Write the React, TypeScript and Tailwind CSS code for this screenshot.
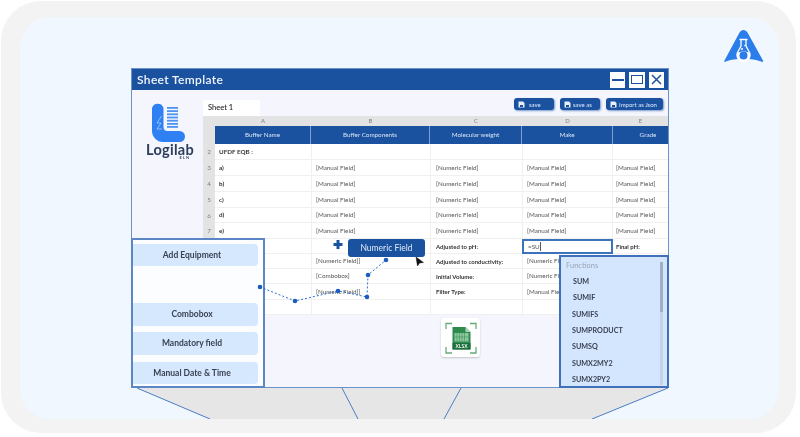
const COLS = "grid grid-cols-[12px_96px_119px_92px_91px_55px]";

type Row = { n?: string; a?: string; b?: string; c?: string; d?: string; e?: string; bold?: boolean; h: string; input?: boolean };

const M = "[Manual Field]";
const N = "[Numeric Field]";
const rows: Row[] = [
  { n: "2", a: "UFDF EQB :", h: "h-[16px]" },
  { n: "3", a: "a)", b: M, c: N, d: M, e: M, h: "h-[16px]" },
  { n: "4", a: "b)", b: M, c: N, d: M, e: M, h: "h-[16px]" },
  { n: "5", a: "c)", b: M, c: N, d: M, e: M, h: "h-[16px]" },
  { n: "6", a: "d)", b: M, c: N, d: M, e: M, h: "h-[15px]" },
  { n: "7", a: "e)", b: M, c: N, d: M, e: M, h: "h-[16px]" },
  { c: "Adjusted to pH:", input: true, e: "Final pH:", bold: true, h: "h-[15px]" },
  { b: "[Numeric Field]]", c: "Adjusted to conductivity:", d: N, bold: true, h: "h-[15px]" },
  { b: "[Combobox]", c: "Initial Volume:", d: N, bold: true, h: "h-[15px]" },
  { b: "[Numeric Field]]", c: "Filter Type:", d: M, bold: true, h: "h-[16px]" },
  { h: "h-[15px]" },
];

function Logo() {
  return (
    <div className="flex flex-col pt-[12px] pl-[14px]">
      <svg width="33" height="40" viewBox="0 0 33 40" className="ml-[6px]">
        <path d="M0 6a6 6 0 0 1 11.500 0v19a4 4 0 0 0 4 4h12a5.500 5.500 0 0 1 0 11H11C5 40 0 35 0 29Z" fill="#2f80f2" />
        <path d="M9.500 14L5 21h4L5 27h5" fill="none" stroke="#bcd8fb" strokeWidth="0.700" />
        {[5, 8.200, 11.400, 14.600, 17.800, 21, 24].map((y) => (
          <rect key={y} x="15" y={y} width="11" height="1.800" fill="#4d94f4" />
        ))}
      </svg>
      <div className="text-[14.500px] leading-[13px] font-bold text-[#2c3e5c] font-['Lato',sans-serif] tracking-[0.3px] mt-[1px]">Logilab</div>
      <div className="self-end mr-[13px] text-[4px] leading-[4px] font-bold tracking-[1px] text-[#3b4c68]">ELN</div>
    </div>
  );
}

function Flask() {
  return (
    <svg className="absolute right-[15px] top-[12px]" width="40" height="33" viewBox="0 0 40 33">
      <path d="M15.500 3.500C17.500 0 21.500 0 23.500 3.500L39 31.500C40 33 38 33 37 32.500C32 30.500 27 30 20 30C12 30 7 30.500 2 32.500C1 33 -0.500 33 0.500 31.500Z" fill="#2b7de9" />
      <path d="M15.500 10.500h8M17 10.500v6.500L13.500 23.500a6.500 6.500 0 1 0 12 0L22 17V10.500" fill="#2b7de9" stroke="#fff" strokeWidth="1.300" />
      <path d="M13.500 24C16 22 23 22 25.500 24a6.500 6.500 0 1 1 -12 0Z" fill="#fff" />
      <circle cx="19.500" cy="26.500" r="4" fill="#2b7de9" />
      <circle cx="18" cy="20" r="1" fill="#fff" />
      <circle cx="21" cy="16.500" r="0.800" fill="#fff" />
    </svg>
  );
}

function ToolBtn({ label, w, pad }: { label: string; w: string; pad: string }) {
  return (
    <div className={`${w} h-[12px] bg-[#1a52a0] rounded-[3px] shadow-[1px_1px_2px_rgba(26,82,160,0.55)] flex items-center pl-[4px] text-[6px] text-[#dce8f8]`}>
      <svg width="7" height="7" viewBox="0 0 7 7" className="shrink-0">
        <path d="M0.500 0.500H5L6.500 2V6.500H0.500Z" fill="#e6effa" />
        <rect x="2" y="4" width="3" height="2" fill="#1a52a0" />
      </svg>
      <span className={`${pad} whitespace-nowrap`}>{label}</span>
    </div>
  );
}

function TitleBar() {
  return (
    <div className="h-[21px] bg-[#1a52a0] flex items-center justify-between pl-[5px] pr-[4px] shrink-0">
      <div className="text-[12px] font-semibold text-[#f2f6fc] font-['Lato',sans-serif] tracking-[0.35px]">Sheet Template</div>
      <div className="flex gap-[4px]">
        <div className="w-[15px] h-[16px] bg-white flex items-center justify-center">
          <div className="w-[12px] h-[2px] bg-[#1a52a0]" />
        </div>
        <div className="w-[16px] h-[16px] bg-white flex items-center justify-center">
          <div className="w-[12px] h-[9px] border-[1.500px] border-[#1a52a0]" />
        </div>
        <div className="w-[15px] h-[16px] bg-white flex items-center justify-center">
          <svg width="11" height="11" viewBox="0 0 11 11">
            <path d="M1 1l9 9M10 1l-9 9" stroke="#1a52a0" strokeWidth="1.500" />
          </svg>
        </div>
      </div>
    </div>
  );
}

function Table() {
  return (
    <div className="w-[465px] font-['Lato',sans-serif]">
      <div className={`${COLS} h-[10px] bg-[#e3e3e3] text-[6px] leading-[10px] text-[#808080] text-center`}>
        <div />
        {["A", "B", "C", "D", "E"].map((l) => (
          <div key={l}>{l}</div>
        ))}
      </div>
      <div className={`${COLS} h-[18px] bg-[#e3e3e3]`}>
        <div />
        {["Buffer Name", "Buffer Components", "Molecular weight", "Make", "Grade"].map((l, i) => (
          <div key={l} className={`bg-[#1a52a0] text-[6.300px] text-[#d8e4f5] flex items-center justify-center ${i < 4 ? "border-r border-[#7c9fd0]" : "pl-[15px]"}`}>
            {l}
          </div>
        ))}
      </div>
      {rows.map((r, i) => (
        <div key={i} className={`${COLS} ${r.h} bg-white text-[6.300px] text-[#555]`}>
          <div className="bg-[#e3e3e3] text-[#808080] flex items-center justify-center">{r.n}</div>
          <div className="pl-[4px] flex items-center font-bold text-[#333] border-b border-[#f0f0f0]">{r.a}</div>
          <div className="pl-[4px] flex items-center border-l border-b border-[#f0f0f0]">{r.b}</div>
          <div className={`pl-[5px] flex items-center border-l border-b border-[#f0f0f0] whitespace-nowrap ${r.bold ? "font-bold text-[#333] text-[6px]" : ""}`}>{r.c}</div>
          {r.input ? (
            <div className="border-2 border-[#3d72bd] flex items-center pl-[4px]">
              =SU<span className="w-[0.700px] h-[9px] bg-[#555]" />
            </div>
          ) : (
            <div className="pl-[4px] flex items-center border-x border-b border-[#f0f0f0] whitespace-nowrap overflow-hidden">{r.d}</div>
          )}
          <div className={`pl-[3px] flex items-center border-b border-[#f0f0f0] whitespace-nowrap ${r.bold ? "font-bold text-[#333] text-[6px]" : ""}`}>{r.e}</div>
        </div>
      ))}
    </div>
  );
}

function Xlsx() {
  return (
    <div className="w-[39px] h-[39px] ml-[238px] mt-[3px] bg-white rounded-[3px] shadow-[0_1px_2px_rgba(0,0,0,0.2)] flex items-center justify-center">
      <svg width="32" height="32" viewBox="0 0 32 32">
        <path d="M1 7V1.500H7M25 1.500H31V7M1 25V31H7M25 31H31V25" fill="none" stroke="#68ab79" strokeWidth="1.300" />
        <path d="M7.500 5H20.500L25.500 10V27.500H7.500Z" fill="#2e8b4e" />
        <path d="M20.500 5V10H25.500Z" fill="#a9d5b6" />
        <rect x="9.500" y="11" width="14" height="8.500" fill="#8cc69d" />
        <path d="M12 11V19.500M14.500 11V19.500M17 11V19.500M19.500 11V19.500M9.500 15H23.500" stroke="#2e8b4e" strokeWidth="0.500" />
        <rect x="7.500" y="21" width="18" height="6.500" fill="#1f6f3c" />
        <text x="16.500" y="26.200" fontSize="5" fontWeight="700" fill="#e8f4ec" textAnchor="middle" fontFamily="Lato, sans-serif">XLSX</text>
      </svg>
    </div>
  );
}

function SidePanel() {
  const cls = "w-[125px] bg-[#d6e8fe] rounded-r-[4px] flex items-center justify-center pr-[7px] text-[8.500px] font-bold text-[#3a4152]";
  return (
    <div className="absolute left-[-1px] bottom-[-1px] w-[134px] h-[150px] bg-[#fcfdff] border-2 border-[#5c86c6] pt-[4px] flex flex-col font-['Lato',sans-serif]">
      <div className={`${cls} h-[22px]`}>Add Equipment</div>
      <div className="h-[37px] shrink-0" />
      <div className={`${cls} h-[23px]`}>Combobox</div>
      <div className={`${cls} h-[23px] mt-[6px]`}>Mandatory field</div>
      <div className={`${cls} h-[22px] mt-[7px]`}>Manual Date &amp; Time</div>
    </div>
  );
}

function FunctionList() {
  const items: [string, string][] = [
    ["SUM", "pl-[12px]"],
    ["SUMIF", "pl-[12px]"],
    ["SUMIFS", "pl-[11px]"],
    ["SUMPRODUCT", "pl-[11px]"],
    ["SUMSQ", "pl-[11px]"],
    ["SUMX2MY2", "pl-[11px]"],
    ["SUMX2PY2", "pl-[11px]"],
  ];
  return (
    <div className="absolute right-[-1px] bottom-[-1px] w-[110px] h-[133px] bg-[#d4e6fd] border-2 border-[#3f70b9] font-['Lato',sans-serif]">
      <div className="pl-[5px] pt-[3px] h-[17px] text-[7.500px] text-[#9aa6b8]">Functions</div>
      {items.map(([t, p]) => (
        <div key={t} className={`h-[16.400px] flex items-center text-[7.200px] font-bold text-[#3a4152] ${p}`}>
          {t}
        </div>
      ))}
      <div className="absolute right-[4px] top-[5px] bottom-[1px] w-[3px] bg-[#c3d4ea]">
        <div className="h-[50px] bg-[#9fb1c9]" />
      </div>
    </div>
  );
}

function DragOverlay() {
  const pts: [number, number][] = [
    [128, 218],
    [163, 232],
    [206, 222],
    [235, 228],
    [236, 206],
    [254, 191],
  ];
  return (
    <>
      <svg className="absolute left-0 top-0" width="536" height="319" viewBox="0 0 536 319">
        <polyline points={pts.map((p) => p.join(",")).join(" ")} fill="none" stroke="#2c6fd1" strokeWidth="1" strokeDasharray="2 2" />
        {pts.map((p) => (
          <circle key={p[0]} cx={p[0]} cy={p[1]} r="2.300" fill="#1a5cc0" />
        ))}
        <path d="M204.500 171h3v3h3v3h-3v3h-3v-3h-3v-3h3Z" fill="#1a52a0" />
        <path d="M284 188l1.500 9 2-3 4-0.500Z" fill="#111" stroke="#111" strokeWidth="0.500" />
      </svg>
      <div className="absolute left-[216px] top-[170px] w-[77px] h-[18px] bg-[#1a52a0] rounded-[3px] flex items-center justify-center text-[8.500px] text-[#dfe9f7] font-['Lato',sans-serif]">
        Numeric Field
      </div>
    </>
  );
}

function Stand() {
  return (
    <svg width="759" height="31" viewBox="0 0 759 31" className="shrink-0 -ml-[111px]">
      <polygon points="117,0 190,31 572,31 648,0" fill="#e6e6e6" />
      <path d="M117 0L190 31M648 0L572 31M322 0L338 31M441 0L424 31" stroke="#4b7cc4" strokeWidth="1" fill="none" />
    </svg>
  );
}

export default function App() {
  return (
    <div className="w-[800px] h-[437px] bg-white overflow-hidden p-[1px] font-['Lato',sans-serif] blur-[0.4px]">
      <div className="w-[795px] h-[432px] bg-[#f3f3f3] rounded-[40px] pt-[16px] pb-[14px] pl-[19px] pr-[17px]">
        <div className="relative h-full bg-[#f0f7ff] rounded-[30px] overflow-hidden pl-[111px] pt-[51px] flex flex-col items-start">
          <Flask />
          <div className="relative w-[538px] h-[320px] shrink-0 border border-[#6a93cc] bg-[#f5f5fe] flex flex-col">
            <TitleBar />
            <div className="flex flex-1">
              <div className="w-[71px] shrink-0">
                <Logo />
              </div>
              <div className="flex flex-col flex-1">
                <div className="h-[26px] flex items-end justify-between pr-[5px]">
                  <div className="w-[57px] h-[16px] bg-white text-[7.500px] font-medium text-[#222] pl-[5px] flex items-center">Sheet 1</div>
                  <div className="flex gap-[6px] self-start mt-[8px]">
                    <ToolBtn label="save" w="w-[40px]" pad="pl-[4px]" />
                    <ToolBtn label="save as" w="w-[40px]" pad="pl-[2px]" />
                    <ToolBtn label="Import as Json" w="w-[57px]" pad="pl-[2px]" />
                  </div>
                </div>
                <Table />
                <Xlsx />
              </div>
            </div>
            <SidePanel />
            <FunctionList />
            <DragOverlay />
          </div>
          <Stand />
        </div>
      </div>
    </div>
  );
}
